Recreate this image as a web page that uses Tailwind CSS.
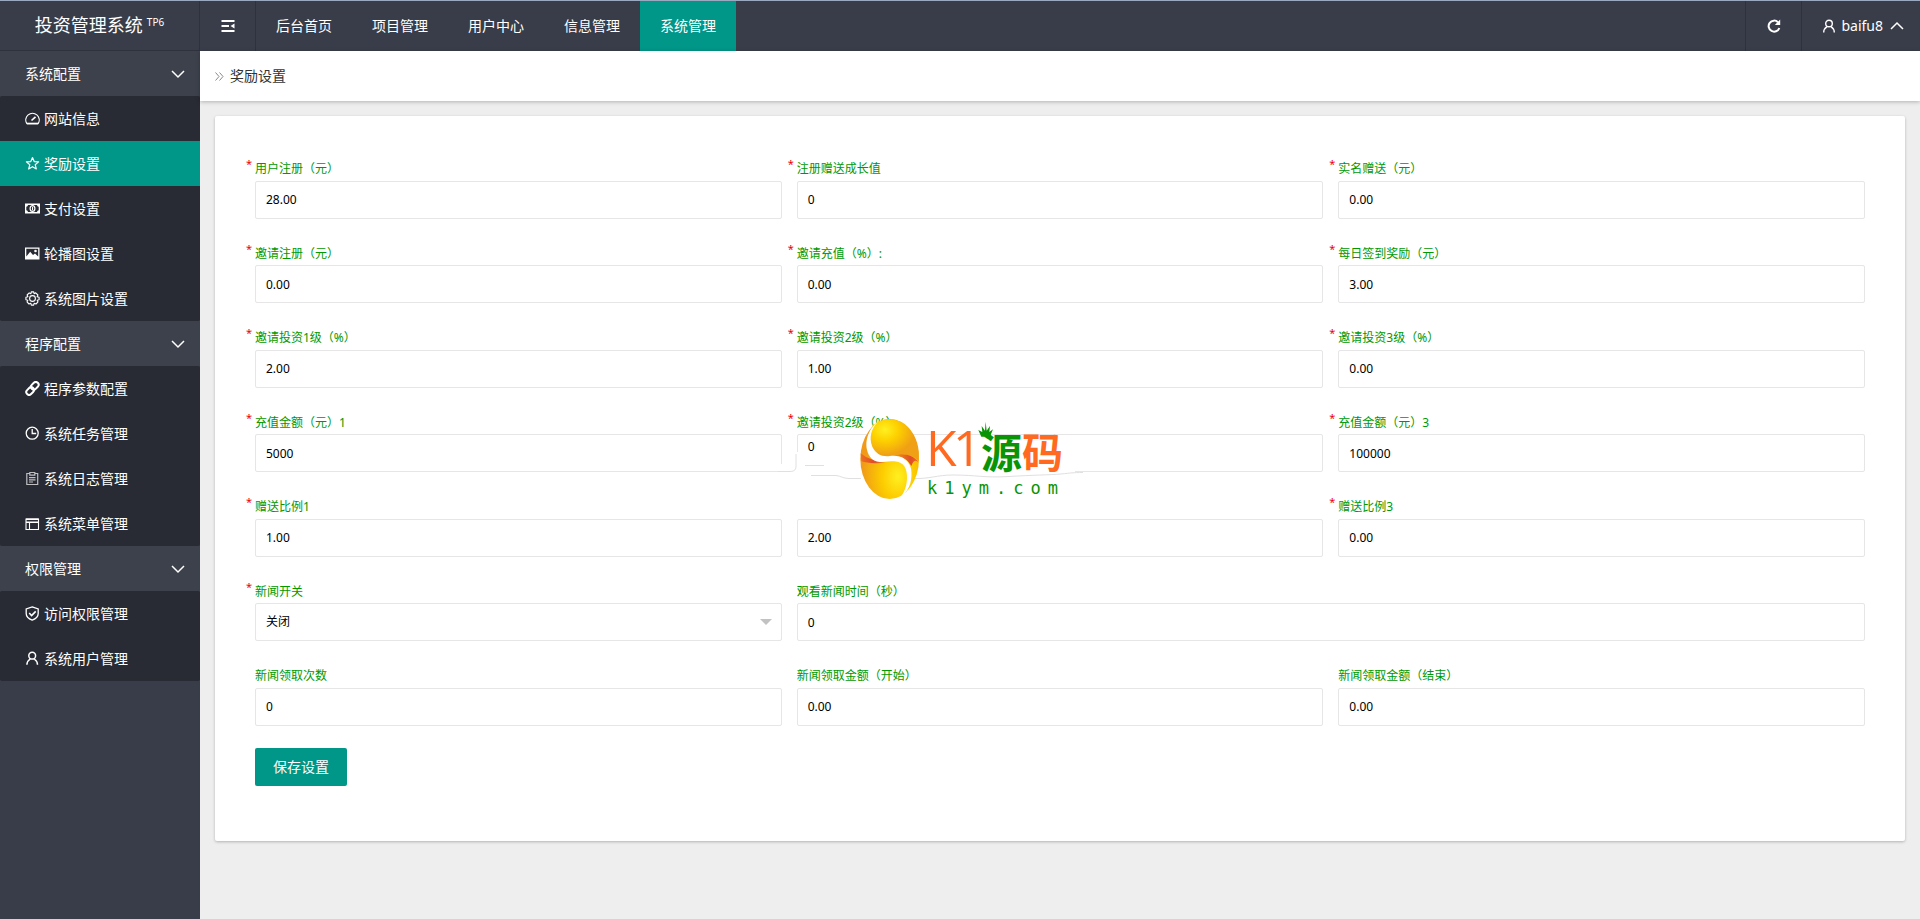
<!DOCTYPE html>
<html lang="zh-CN">
<head>
    <meta charset="UTF-8">
    <meta name="viewport" content="width=device-width, initial-scale=1">
    <title>奖励设置 - 投资管理系统</title>
    <script src="https://cdn.jsdelivr.net/npm/@tailwindcss/browser@4"></script>
</head>
<body class="flex min-h-screen flex-col bg-[#eee] font-['Noto_Sans','Noto_Sans_CJK_SC',sans-serif] text-sm text-[#333]">

    <!-- Top bar -->
    <header class="flex h-[51px] border-t border-[#9aa8c0] bg-[#393d49] text-white">
        <h1 class="flex w-[200px] shrink-0 items-center justify-center border-r border-b border-[#2f323c] pb-[2px] text-lg">
            <a href="#">投资管理系统<sup class="ml-1 -top-[6px] text-[10px]">TP6</sup></a>
        </h1>
        <button type="button" aria-label="收起菜单" class="flex w-14 items-center justify-center border-r border-[#2f323c]">
            <svg class="size-4" viewBox="0 0 16 16" fill="none" stroke="currentColor" stroke-width="2"><path d="M1.500 3H14.500M1.500 8H9M1.500 13H14.500"/><path d="M14.500 5.500V10.500L10.500 8Z" fill="currentColor" stroke="none"/></svg>
        </button>
        <nav class="flex">
            <a href="#" class="flex items-center px-5">后台首页</a>
            <a href="#" class="flex items-center px-5">项目管理</a>
            <a href="#" class="flex items-center px-5">用户中心</a>
            <a href="#" class="flex items-center px-5">信息管理</a>
            <a href="#" class="flex items-center bg-[#009688] px-5">系统管理</a>
        </nav>
        <div class="ml-auto flex">
            <button type="button" aria-label="刷新" class="flex w-14 items-center justify-center border-l border-[#2f323c]">
                <svg class="size-4" viewBox="0 0 16 16" fill="none" stroke="currentColor" stroke-width="2"><path d="M13.300 10A5.500 5.500 0 1 1 12 4.200"/><path d="M14.200 1.500V7H8.800Z" fill="currentColor" stroke="none"/></svg>
            </button>
            <button type="button" class="flex items-center gap-[5px] border-l border-[#2f323c] pr-4 pl-5">
                <svg class="size-[14px]" viewBox="0 0 14 14" fill="none" stroke="currentColor" stroke-width="1.400"><circle cx="7" cy="4.500" r="3.300"/><path d="M1.700 13.500C1.700 10.500 3.200 8.800 5 7.600M12.300 13.500C12.300 10.500 10.800 8.800 9 7.600"/></svg>
                <span>baifu8</span>
                <svg class="ml-[2px] h-3 w-[14px]" viewBox="0 0 14 12" fill="none" stroke="currentColor" stroke-width="1.500"><path d="M1 9L7 3L13 9"/></svg>
            </button>
        </div>
    </header>

    <div class="flex flex-1">
        <!-- Side menu -->
        <aside class="w-[200px] shrink-0 bg-[#393d49] text-white">
            <button type="button" class="flex h-[45px] w-full items-center justify-between bg-[#3d414c] pr-[15px] pl-[25px]">
                系统配置
                <svg class="h-3 w-[14px]" viewBox="0 0 14 12" fill="none" stroke="currentColor" stroke-width="1.500"><path d="M1 3L7 9L13 3"/></svg>
            </button>
            <ul class="rounded-xs bg-[#282b33]">
                <li><a href="#" class="flex h-[45px] items-center gap-1 pl-[25px]">
                    <svg class="size-[15px]" viewBox="0 0 15 15" fill="none" stroke="currentColor" stroke-width="1.200"><path d="M1.800 12.500A6.700 6.700 0 1 1 13.200 12.500Z"/><path d="M1.800 12.600H13.200" stroke-width="1.800"/><path d="M6.500 9.500L10.500 5.800" stroke-width="1.700"/></svg>
                    网站信息</a></li>
                <li><a href="#" class="flex h-[45px] items-center gap-1 bg-[#009688] pl-[25px]">
                    <svg class="size-[15px]" viewBox="0 0 15 15" fill="none" stroke="currentColor" stroke-width="1.200" stroke-linejoin="round"><path d="M7.500 1.500L9.200 5.600L13.600 5.900L10.200 8.700L11.300 13L7.500 10.700L3.700 13L4.800 8.700L1.400 5.900L5.800 5.600Z"/></svg>
                    奖励设置</a></li>
                <li><a href="#" class="flex h-[45px] items-center gap-1 pl-[25px]">
                    <svg class="size-[15px]" viewBox="0 0 15 15" fill="currentColor"><path fill-rule="evenodd" d="M0 2.500H15V12.500H0ZM3 4A2 2 0 0 1 1.300 5.700V9.300A2 2 0 0 1 3 11H12A2 2 0 0 1 13.700 9.300V5.700A2 2 0 0 1 12 4Z"/><ellipse cx="7.500" cy="7.500" rx="2.400" ry="2.900" fill="none" stroke="currentColor" stroke-width="1.200"/><path d="M7 5.800H8.100V9.200H7Z"/></svg>
                    支付设置</a></li>
                <li><a href="#" class="flex h-[45px] items-center gap-1 pl-[25px]">
                    <svg class="size-[15px]" viewBox="0 0 15 15" fill="currentColor"><path fill-rule="evenodd" d="M0 1.500H14.500V13.500H0ZM1.300 2.800V10.500L5.200 5.800L8 9L10 7.500L13.200 10.500V2.800Z"/><circle cx="10.500" cy="5" r="1.300"/></svg>
                    轮播图设置</a></li>
                <li><a href="#" class="flex h-[45px] items-center gap-1 pl-[25px]">
                    <svg class="size-[15px]" viewBox="0 0 15 15" fill="none" stroke="currentColor" stroke-width="1.100"><circle cx="7.500" cy="7.500" r="2.900"/><path stroke-linejoin="round" d="M6.300 0.900H8.700L9.100 2.700L10.700 1.800L12.900 4L12.100 5.700L14.100 6.300V8.700L12.200 9.200L13 10.900L11 13L9.200 12.200L8.700 14.100H6.300L5.800 12.200L4 13L2 10.900L2.800 9.200L0.900 8.700V6.300L2.900 5.700L2.100 4L4.200 1.900L5.900 2.700Z"/></svg>
                    系统图片设置</a></li>
            </ul>

            <button type="button" class="flex h-[45px] w-full items-center justify-between bg-[#3d414c] pr-[15px] pl-[25px]">
                程序配置
                <svg class="h-3 w-[14px]" viewBox="0 0 14 12" fill="none" stroke="currentColor" stroke-width="1.500"><path d="M1 3L7 9L13 3"/></svg>
            </button>
            <ul class="rounded-xs bg-[#282b33]">
                <li><a href="#" class="flex h-[45px] items-center gap-1 pl-[25px]">
                    <svg class="size-[15px]" viewBox="0 0 15 15" fill="none" stroke="currentColor" stroke-width="2"><rect x="5.500" y="2" width="8.500" height="5.600" rx="2.800" transform="rotate(-45 9.800 4.800)"/><rect x="0.900" y="7.300" width="8.500" height="5.600" rx="2.800" transform="rotate(-45 5.100 10.100)"/></svg>
                    程序参数配置</a></li>
                <li><a href="#" class="flex h-[45px] items-center gap-1 pl-[25px]">
                    <svg class="size-[15px]" viewBox="0 0 15 15" fill="none" stroke="currentColor" stroke-width="1.300"><circle cx="7.200" cy="7.200" r="6"/><path d="M7.200 3V7.500H11.200"/></svg>
                    系统任务管理</a></li>
                <li><a href="#" class="flex h-[45px] items-center gap-1 pl-[25px]">
                    <svg class="size-[15px] text-white/70" viewBox="0 0 15 15" fill="none" stroke="currentColor" stroke-width="1.200"><path d="M4.500 2.500H1.800V13.500H12.700V2.500H10M4.800 1.500H9.800V4.200H4.800ZM4 6.700H10.500M4 8.900H10.500M4 11H8"/></svg>
                    系统日志管理</a></li>
                <li><a href="#" class="flex h-[45px] items-center gap-1 pl-[25px]">
                    <svg class="size-[15px]" viewBox="0 0 15 15" fill="none" stroke="currentColor" stroke-width="1.100"><path d="M1 3H13.500V13.500H1ZM4.500 6.500V13.500"/><path d="M1 3.200H13.500M1 6.200H13.500" stroke-width="1.500"/></svg>
                    系统菜单管理</a></li>
            </ul>

            <button type="button" class="flex h-[45px] w-full items-center justify-between bg-[#3d414c] pr-[15px] pl-[25px]">
                权限管理
                <svg class="h-3 w-[14px]" viewBox="0 0 14 12" fill="none" stroke="currentColor" stroke-width="1.500"><path d="M1 3L7 9L13 3"/></svg>
            </button>
            <ul class="rounded-xs bg-[#282b33]">
                <li><a href="#" class="flex h-[45px] items-center gap-1 pl-[25px]">
                    <svg class="size-[15px]" viewBox="0 0 15 15" fill="none" stroke="currentColor" stroke-width="1.300"><path d="M7.200 0.900L13.200 3V7.500C13.200 10.700 10.500 12.900 7.200 14.100C3.900 12.900 1.200 10.700 1.200 7.500V3Z"/><path d="M4.200 7L6.600 9.500L10.700 5.400" stroke-width="1.600"/></svg>
                    访问权限管理</a></li>
                <li><a href="#" class="flex h-[45px] items-center gap-1 pl-[25px]">
                    <svg class="size-[15px]" viewBox="0 0 15 15" fill="none" stroke="currentColor" stroke-width="1.500"><circle cx="7.200" cy="4.700" r="3.400"/><path d="M1.900 13.800C1.900 10.900 3.400 9.200 5.200 8M12.500 13.800C12.500 10.900 11 9.200 9.200 8"/></svg>
                    系统用户管理</a></li>
            </ul>
        </aside>

        <main class="min-w-0 flex-1">
            <div class="flex h-[50px] items-center gap-[6px] bg-white px-[15px] shadow-[0_1px_4px_rgba(0,0,0,0.25)]">
                <svg class="size-[9px] text-[#888]" viewBox="0 0 9 9" fill="none" stroke="currentColor"><path d="M0.500 0.500L4 4.500L0.500 8.500M4.500 0.500L8 4.500L4.500 8.500"/></svg>
                <span>奖励设置</span>
            </div>

            <form class="m-[15px] rounded-xs bg-white px-10 pt-10 pb-[55px] shadow-[0_1px_3px_rgba(0,0,0,0.25)]">
                <div class="grid grid-cols-3 gap-x-[15px] gap-y-[22px] text-xs text-black">
                    <div class="relative">
                        <span class="absolute -left-[9px] top-px text-[11px] text-red-600">*</span>
                        <label for="reg" class="block pt-[3px] pb-[2px] text-[13px] leading-normal text-[#090]"><span class="text-xs">用户注册（元）</span></label>
                        <input id="reg" type="text" value="28.00" class="block h-[38px] w-full rounded-xs border border-[#e6e6e6] px-[10px]">
                    </div>
                    <div class="relative">
                        <span class="absolute -left-[9px] top-px text-[11px] text-red-600">*</span>
                        <label for="growth" class="block pt-[3px] pb-[2px] text-[13px] leading-normal text-[#090]"><span class="text-xs">注册赠送成长值</span></label>
                        <input id="growth" type="text" value="0" class="block h-[38px] w-full rounded-xs border border-[#e6e6e6] px-[10px]">
                    </div>
                    <div class="relative">
                        <span class="absolute -left-[9px] top-px text-[11px] text-red-600">*</span>
                        <label for="realname" class="block pt-[3px] pb-[2px] text-[13px] leading-normal text-[#090]"><span class="text-xs">实名赠送（元）</span></label>
                        <input id="realname" type="text" value="0.00" class="block h-[38px] w-full rounded-xs border border-[#e6e6e6] px-[10px]">
                    </div>

                    <div class="relative">
                        <span class="absolute -left-[9px] top-px text-[11px] text-red-600">*</span>
                        <label for="invite_reg" class="block pt-[3px] pb-[2px] text-[13px] leading-normal text-[#090]"><span class="text-xs">邀请注册（元）</span></label>
                        <input id="invite_reg" type="text" value="0.00" class="block h-[38px] w-full rounded-xs border border-[#e6e6e6] px-[10px]">
                    </div>
                    <div class="relative">
                        <span class="absolute -left-[9px] top-px text-[11px] text-red-600">*</span>
                        <label for="invite_pay" class="block pt-[3px] pb-[2px] text-[13px] leading-normal text-[#090]"><span class="text-xs">邀请充值（%）:</span></label>
                        <input id="invite_pay" type="text" value="0.00" class="block h-[38px] w-full rounded-xs border border-[#e6e6e6] px-[10px]">
                    </div>
                    <div class="relative">
                        <span class="absolute -left-[9px] top-px text-[11px] text-red-600">*</span>
                        <label for="sign" class="block pt-[3px] pb-[2px] text-[13px] leading-normal text-[#090]"><span class="text-xs">每日签到奖励（元）</span></label>
                        <input id="sign" type="text" value="3.00" class="block h-[38px] w-full rounded-xs border border-[#e6e6e6] px-[10px]">
                    </div>

                    <div class="relative">
                        <span class="absolute -left-[9px] top-px text-[11px] text-red-600">*</span>
                        <label for="level1" class="block pt-[3px] pb-[2px] text-[13px] leading-normal text-[#090]"><span class="text-xs">邀请投资1级（%）</span></label>
                        <input id="level1" type="text" value="2.00" class="block h-[38px] w-full rounded-xs border border-[#e6e6e6] px-[10px]">
                    </div>
                    <div class="relative">
                        <span class="absolute -left-[9px] top-px text-[11px] text-red-600">*</span>
                        <label for="level2" class="block pt-[3px] pb-[2px] text-[13px] leading-normal text-[#090]"><span class="text-xs">邀请投资2级（%）</span></label>
                        <input id="level2" type="text" value="1.00" class="block h-[38px] w-full rounded-xs border border-[#e6e6e6] px-[10px]">
                    </div>
                    <div class="relative">
                        <span class="absolute -left-[9px] top-px text-[11px] text-red-600">*</span>
                        <label for="level3" class="block pt-[3px] pb-[2px] text-[13px] leading-normal text-[#090]"><span class="text-xs">邀请投资3级（%）</span></label>
                        <input id="level3" type="text" value="0.00" class="block h-[38px] w-full rounded-xs border border-[#e6e6e6] px-[10px]">
                    </div>

                    <div class="relative">
                        <span class="absolute -left-[9px] top-px text-[11px] text-red-600">*</span>
                        <label for="pay1" class="block pt-[3px] pb-[2px] text-[13px] leading-normal text-[#090]"><span class="text-xs">充值金额（元）1</span></label>
                        <input id="pay1" type="text" value="5000" class="block h-[38px] w-full rounded-xs border border-[#e6e6e6] px-[10px]">
                    </div>
                    <div class="relative">
                        <span class="absolute -left-[9px] top-px text-[11px] text-red-600">*</span>
                        <label for="pay2" class="block pt-[3px] pb-[2px] text-[13px] leading-normal text-[#090]"><span class="text-xs">邀请投资2级（%）</span></label>
                        <input id="pay2" type="text" value="0" class="block h-[38px] w-full rounded-xs border border-[#e6e6e6] px-[10px] pb-[14px]">
                        <!-- Site logo laid over the form -->
                        <svg class="pointer-events-none absolute -left-10 top-0 h-[96px] w-[340px]" viewBox="0 0 340 96">
                            <defs>
                                <radialGradient id="goldTop" cx="0.320" cy="0.250" r="0.600"><stop offset="0" stop-color="#fff020"/><stop offset="0.450" stop-color="#fdd000"/><stop offset="1" stop-color="#f0a014"/></radialGradient>
                                <radialGradient id="goldBottom" cx="0.640" cy="0.720" r="0.620"><stop offset="0" stop-color="#fff020"/><stop offset="0.450" stop-color="#fccb00"/><stop offset="1" stop-color="#f09a18"/></radialGradient>
                                <linearGradient id="redLeft"><stop offset="0" stop-color="#ee7020"/><stop offset="0.500" stop-color="#e04c28"/><stop offset="1" stop-color="#f09018"/></linearGradient>
                                <linearGradient id="redRight"><stop offset="0" stop-color="#f0a018"/><stop offset="0.700" stop-color="#e04c28"/><stop offset="1" stop-color="#ee7020"/></linearGradient>
                            </defs>
                            <path fill="#fff" d="M22 54H39V42H45V60H318V64H22Z"/>
                            <g fill="none" stroke="#e0e0e0">
                                <path d="M21 61.500H33C38 61.500 39 59 39 56V44"/>
                                <path d="M48 55.500H67M54 65.500H79C84 66 86 68.500 92 68.500H104M158 68.500C172 69 180 65 196 65C220 65 226 68 252 66.500C276 65 292 65 304 64C314 63 316 62.500 326 62.500"/>
                            </g>
                            <g transform="translate(13 -10) scale(0.3333)">
                                <ellipse cx="359" cy="177" rx="88" ry="120" fill="url(#goldBottom)"/>
                                <path fill="url(#goldTop)" d="M325 65C350 52 392 54 417 84C440 110 450 145 446 184C430 165 400 158 370 168C330 178 300 160 297 120C295 95 305 75 325 65Z"/>
                                <path fill="url(#redLeft)" d="M272 160C290 176 315 183 348 186C325 192 290 190 274 184Z"/>
                                <path fill="url(#redRight)" d="M368 168C400 156 432 166 447 188C438 178 430 180 424 198C412 176 392 168 368 168Z"/>
                                <path fill="#fff" d="M326 64C286 92 278 148 305 176C325 192 350 184 372 184C402 186 412 205 411 235C410 262 402 276 394 290C422 268 428 235 423 205C414 175 390 165 360 168C335 171 318 162 307 140C296 112 304 84 326 64Z"/>
                                <path fill="#099405" d="M634 110L625 90L637 96L635 78L645 92L647 65L650 92L660 78L658 96L669 88L660 110Z"/>
                            </g>
                            <text x="169 196" y="56" class="fill-[#ff6a20] font-['Open_Sans',sans-serif] text-[50px]">K1</text>
                            <text x="224" y="58" class="fill-[#099405] font-['Noto_Sans_CJK_SC',sans-serif] text-[41px] font-bold">源<tspan class="fill-[#ff6a20]">码</tspan></text>
                            <text x="170" y="84" class="fill-[#099405] font-['DejaVu_Sans_Mono',monospace] text-[17px] tracking-[7px]">k1ym.com</text>
                        </svg>
                    </div>
                    <div class="relative">
                        <span class="absolute -left-[9px] top-px text-[11px] text-red-600">*</span>
                        <label for="pay3" class="block pt-[3px] pb-[2px] text-[13px] leading-normal text-[#090]"><span class="text-xs">充值金额（元）3</span></label>
                        <input id="pay3" type="text" value="100000" class="block h-[38px] w-full rounded-xs border border-[#e6e6e6] px-[10px]">
                    </div>

                    <div class="relative">
                        <span class="absolute -left-[9px] top-px text-[11px] text-red-600">*</span>
                        <label for="ratio1" class="block pt-[3px] pb-[2px] text-[13px] leading-normal text-[#090]"><span class="text-xs">赠送比例1</span></label>
                        <input id="ratio1" type="text" value="1.00" class="block h-[38px] w-full rounded-xs border border-[#e6e6e6] px-[10px]">
                    </div>
                    <div class="flex flex-col justify-end">
                        <input type="text" value="2.00" aria-label="赠送比例2" class="block h-[38px] w-full rounded-xs border border-[#e6e6e6] px-[10px]">
                    </div>
                    <div class="relative">
                        <span class="absolute -left-[9px] top-px text-[11px] text-red-600">*</span>
                        <label for="ratio3" class="block pt-[3px] pb-[2px] text-[13px] leading-normal text-[#090]"><span class="text-xs">赠送比例3</span></label>
                        <input id="ratio3" type="text" value="0.00" class="block h-[38px] w-full rounded-xs border border-[#e6e6e6] px-[10px]">
                    </div>

                    <div class="relative">
                        <span class="absolute -left-[9px] top-px text-[11px] text-red-600">*</span>
                        <label for="news" class="block pt-[3px] pb-[2px] text-[13px] leading-normal text-[#090]"><span class="text-xs">新闻开关</span></label>
                        <select id="news" class="block h-[38px] w-full appearance-none rounded-xs border border-[#e6e6e6] bg-white px-[10px]">
                            <option selected>关闭</option>
                            <option>开启</option>
                        </select>
                        <svg class="pointer-events-none absolute right-[10px] bottom-4 h-[6px] w-3 text-[#c2c2c2]" viewBox="0 0 12 6" fill="currentColor"><path d="M0 0H12L6 6Z"/></svg>
                    </div>
                    <div class="col-span-2">
                        <label for="news_time" class="block pt-[3px] pb-[2px] text-[13px] leading-normal text-[#090]"><span class="text-xs">观看新闻时间（秒）</span></label>
                        <input id="news_time" type="text" value="0" class="block h-[38px] w-full rounded-xs border border-[#e6e6e6] px-[10px]">
                    </div>

                    <div>
                        <label for="news_count" class="block pt-[3px] pb-[2px] text-[13px] leading-normal text-[#090]"><span class="text-xs">新闻领取次数</span></label>
                        <input id="news_count" type="text" value="0" class="block h-[38px] w-full rounded-xs border border-[#e6e6e6] px-[10px]">
                    </div>
                    <div>
                        <label for="news_min" class="block pt-[3px] pb-[2px] text-[13px] leading-normal text-[#090]"><span class="text-xs">新闻领取金额（开始）</span></label>
                        <input id="news_min" type="text" value="0.00" class="block h-[38px] w-full rounded-xs border border-[#e6e6e6] px-[10px]">
                    </div>
                    <div>
                        <label for="news_max" class="block pt-[3px] pb-[2px] text-[13px] leading-normal text-[#090]"><span class="text-xs">新闻领取金额（结束）</span></label>
                        <input id="news_max" type="text" value="0.00" class="block h-[38px] w-full rounded-xs border border-[#e6e6e6] px-[10px]">
                    </div>
                </div>
                <button type="submit" class="mt-[22px] h-[38px] rounded-xs bg-[#009688] px-[18px] text-white">保存设置</button>
            </form>
        </main>
    </div>
</body>
</html>
